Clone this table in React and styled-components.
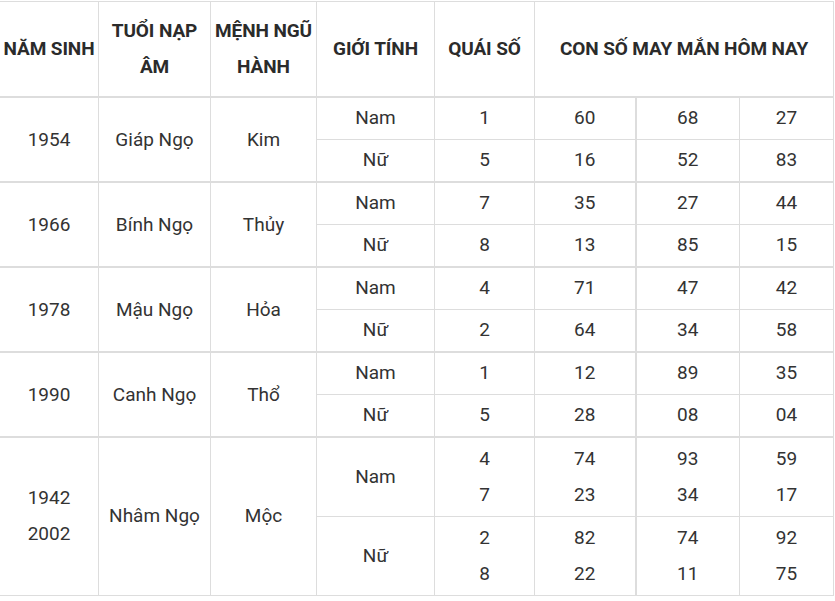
import React from 'react';
import styled, { createGlobalStyle } from 'styled-components';

const GlobalStyle = createGlobalStyle`
  html, body {
    margin: 0;
    padding: 0;
    background: #fff;
  }
  body {
    font-family: Roboto, "Liberation Sans", sans-serif;
    color: #333;
  }
`;

const Wrapper = styled.div`
  width: 835px;
  height: 601px;
  overflow: hidden;
  padding-top: 1px;
  box-sizing: border-box;
`;

const Table = styled.table`
  border-collapse: collapse;
  table-layout: fixed;
  width: 834px;
  margin-left: -1px;
  font-size: 19px;
  line-height: 36px;
`;

const HeadCell = styled.th`
  border: 1px solid #ddd;
  border-bottom: 2px solid #ddd;
  font-weight: 700;
  color: #2b2b2b;
  text-align: center;
  vertical-align: middle;
  padding: 0 1px;
  height: 94px;
  letter-spacing: -0.1px;
`;

const Group = styled.tbody`
  border-top: 2px solid #ddd;
`;

const Row = styled.tr`
  height: ${(p) => p.$h}px;
`;

const Cell = styled.td`
  border: 1px solid #ddd;
  border-left-width: ${(p) => (p.$split ? 2 : 1)}px;
  text-align: center;
  vertical-align: middle;
  padding: 0;
  font-weight: 400;
  color: #333;
`;

const cols = [99, 112, 106, 118, 100, 101, 104, 94];

const groups = [
  {
    year: ['1954'], tuoi: 'Giáp Ngọ', menh: 'Kim',
    rows: [
      { gt: 'Nam', qs: ['1'], n: [['60'], ['68'], ['27']] },
      { gt: 'Nữ', qs: ['5'], n: [['16'], ['52'], ['83']] },
    ],
  },
  {
    year: ['1966'], tuoi: 'Bính Ngọ', menh: 'Thủy',
    rows: [
      { gt: 'Nam', qs: ['7'], n: [['35'], ['27'], ['44']] },
      { gt: 'Nữ', qs: ['8'], n: [['13'], ['85'], ['15']] },
    ],
  },
  {
    year: ['1978'], tuoi: 'Mậu Ngọ', menh: 'Hỏa',
    rows: [
      { gt: 'Nam', qs: ['4'], n: [['71'], ['47'], ['42']] },
      { gt: 'Nữ', qs: ['2'], n: [['64'], ['34'], ['58']] },
    ],
  },
  {
    year: ['1990'], tuoi: 'Canh Ngọ', menh: 'Thổ',
    rows: [
      { gt: 'Nam', qs: ['1'], n: [['12'], ['89'], ['35']] },
      { gt: 'Nữ', qs: ['5'], n: [['28'], ['08'], ['04']] },
    ],
  },
  {
    year: ['1942', '2002'], tuoi: 'Nhâm Ngọ', menh: 'Mộc',
    rows: [
      { gt: 'Nam', qs: ['4', '7'], n: [['74', '23'], ['93', '34'], ['59', '17']] },
      { gt: 'Nữ', qs: ['2', '8'], n: [['82', '22'], ['74', '11'], ['92', '75']] },
    ],
  },
];

const Lines = ({ items }) =>
  items.map((t, i) => (
    <React.Fragment key={i}>
      {i > 0 && <br />}
      {t}
    </React.Fragment>
  ));

const App = () => {
  return (
    <>
      <GlobalStyle />
      <Wrapper>
        <Table>
          <colgroup>
            {cols.map((w, i) => (
              <col key={i} style={{ width: w }} />
            ))}
          </colgroup>
          <thead>
            <tr>
              <HeadCell>NĂM SINH</HeadCell>
              <HeadCell>TUỔI NẠP<br />ÂM</HeadCell>
              <HeadCell>MỆNH NGŨ<br />HÀNH</HeadCell>
              <HeadCell>GIỚI TÍNH</HeadCell>
              <HeadCell>QUÁI SỐ</HeadCell>
              <HeadCell colSpan={3}>CON SỐ MAY MẮN HÔM NAY</HeadCell>
            </tr>
          </thead>
          {groups.map((g, gi) => {
            const tall = g.year.length > 1;
            return (
              <Group key={gi}>
                {g.rows.map((r, ri) => (
                  <Row key={ri} $h={tall ? 79 : ri === 0 ? 42 : 43}>
                    {ri === 0 && (
                      <>
                        <Cell rowSpan={2}><Lines items={g.year} /></Cell>
                        <Cell rowSpan={2}>{g.tuoi}</Cell>
                        <Cell rowSpan={2}>{g.menh}</Cell>
                      </>
                    )}
                    <Cell>{r.gt}</Cell>
                    <Cell><Lines items={r.qs} /></Cell>
                    <Cell><Lines items={r.n[0]} /></Cell>
                    <Cell $split><Lines items={r.n[1]} /></Cell>
                    <Cell><Lines items={r.n[2]} /></Cell>
                  </Row>
                ))}
              </Group>
            );
          })}
        </Table>
      </Wrapper>
    </>
  );
};

export default App;
